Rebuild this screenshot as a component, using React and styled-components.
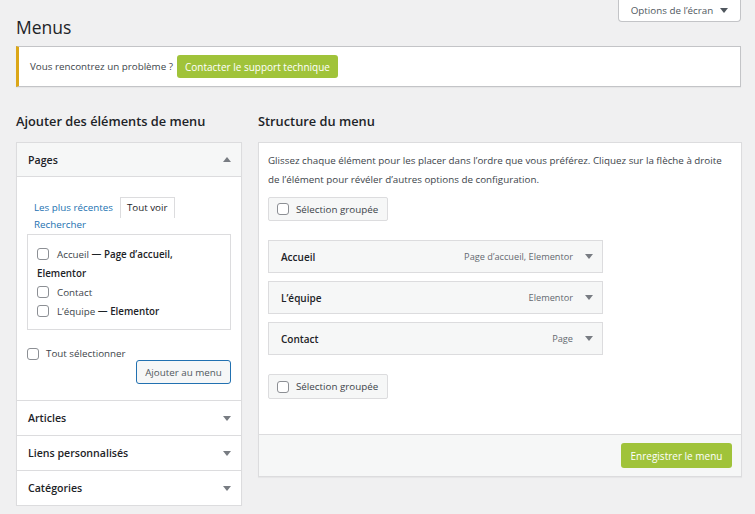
import React from "react";
import styled, { createGlobalStyle } from "styled-components";

const GlobalStyle = createGlobalStyle`
  html, body {
    margin: 0;
    background: #f0f0f1;
  }
  body {
    font-family: "Open Sans", "Noto Sans", sans-serif;
    font-size: 9.8px;
    color: #3c434a;
  }
  * { box-sizing: border-box; }
`;

const Page = styled.div`
  width: 755px;
  padding: 0 14px 0 16px;
`;

const Header = styled.div`
  display: flex;
  justify-content: space-between;
  align-items: flex-start;
  height: 46px;
`;

const Title = styled.h1`
  margin: 0;
  padding-top: 15px;
  font-size: 17.5px;
  font-weight: 400;
  line-height: 24px;
  color: #1d2327;
`;

const ScreenOptions = styled.button`
  display: flex;
  align-items: center;
  justify-content: center;
  gap: 7px;
  width: 123px;
  height: 22px;
  padding: 0;
  background: #fff;
  border: 1px solid #c3c4c7;
  border-top: none;
  border-radius: 0 0 4px 4px;
  font: inherit;
  color: #50575e;
`;

const Notice = styled.div`
  display: flex;
  align-items: center;
  gap: 4px;
  height: 41px;
  padding: 0 11px;
  background: #fff;
  border: 1px solid #c3c4c7;
  border-left: 3px solid #dba617;
  box-shadow: 0 1px 1px rgba(0, 0, 0, 0.04);
`;

const GreenButton = styled.button`
  height: ${(p) => p.$h || 23}px;
  min-width: ${(p) => p.$w || 0}px;
  padding: 0 8px;
  border: none;
  border-radius: 3px;
  background: #a0c33a;
  color: #fff;
  font: inherit;
  font-size: 10px;
`;

const Columns = styled.div`
  display: flex;
  gap: 16px;
`;

const Column = styled.div`
  width: ${(p) => p.$w}px;
  flex: none;
`;

const ColumnHeading = styled.h2`
  margin: 0;
  padding: 24px 0 11px;
  line-height: 20px;
  font-size: 12.8px;
  font-weight: 600;
  color: #1d2327;
`;

const Accordion = styled.div`
  background: #fff;
  border: 1px solid #dcdcde;
  box-shadow: 0 1px 1px rgba(0, 0, 0, 0.04);
`;

const Section = styled.div`
  & + & {
    border-top: 1px solid #dcdcde;
  }
`;

const SectionHeader = styled.div`
  display: flex;
  align-items: center;
  justify-content: space-between;
  height: 34px;
  padding: 0 10px 0 11px;
  background: ${(p) => (p.$open ? "#f6f7f7" : "#fff")};
  border-bottom: ${(p) => (p.$open ? "1px solid #dcdcde" : "none")};
  font-size: 10.6px;
  font-weight: 600;
  color: #1d2327;
`;

const SectionBody = styled.div`
  display: flex;
  flex-direction: column;
  padding: 20px 10px 16px;
`;

const Tabs = styled.div`
  display: flex;
  flex-wrap: wrap;
  align-items: center;
`;

const Tab = styled.span`
  line-height: 14px;
  padding: ${(p) => (p.$active ? "3px 6px" : "0 7px")};
  color: ${(p) => (p.$active ? "#1d2327" : "#2271b1")};
  background: ${(p) => (p.$active ? "#fff" : "transparent")};
  border: ${(p) => (p.$active ? "1px solid #dcdcde" : "none")};
  border-bottom: none;
`;

const ListBox = styled.div`
  margin-top: 2px;
  padding: 10px 9px 8px;
  border: 1px solid #dcdcde;
`;

const ListItem = styled.label`
  display: block;
  line-height: 19px;
`;

const Strong = styled.span`
  font-weight: 600;
  color: #1d2327;
`;

const Check = styled.input.attrs({ type: "checkbox" })`
  appearance: none;
  width: 12px;
  height: 12px;
  margin: 0 ${(p) => p.$gap || 8}px 0 0;
  vertical-align: -2px;
  border: 1px solid #8c8f94;
  border-radius: 3px;
  background: #fff;
`;

const SelectAll = styled.label`
  display: flex;
  align-items: center;
  margin-top: 15px;
  line-height: 18px;
  color: #3c434a;
`;

const SecondaryButton = styled.button`
  align-self: flex-end;
  margin-top: -3px;
  width: 95px;
  height: 24px;
  padding: 0;
  background: #f6f7f7;
  border: 1px solid #2271b1;
  border-radius: 3px;
  font: inherit;
  color: #50575e;
`;

const Panel = styled.div`
  background: #fff;
  border: 1px solid #dcdcde;
  box-shadow: 0 1px 1px rgba(0, 0, 0, 0.04);
`;

const PanelBody = styled.div`
  display: flex;
  flex-direction: column;
  align-items: flex-start;
  padding: 8px 9px 35px;
`;

const Description = styled.p`
  margin: 0;
  line-height: 19px;
`;

const BulkSelect = styled.label`
  display: flex;
  align-items: center;
  width: 120px;
  height: ${(p) => p.$h || 24}px;
  margin-top: ${(p) => p.$mt}px;
  padding-left: 8px;
  background: #f6f7f7;
  border: 1px solid #dcdcde;
  border-radius: 2px;
`;

const MenuItems = styled.div`
  display: flex;
  flex-direction: column;
  gap: 8px;
  margin-top: 19px;
`;

const MenuItem = styled.div`
  display: flex;
  align-items: center;
  width: 335px;
  height: 33px;
  padding: 0 9px 0 12px;
  background: #f6f7f7;
  border: 1px solid #dcdcde;
`;

const ItemTitle = styled.span`
  flex: 1;
  font-size: 10px;
  font-weight: 600;
  color: #1d2327;
`;

const ItemMeta = styled.span`
  margin-right: 12px;
  font-size: 9.2px;
  color: #646970;
`;

const PanelFooter = styled.div`
  display: flex;
  justify-content: flex-end;
  padding: 8px 9px;
  background: #f6f7f7;
  border-top: 1px solid #dcdcde;
`;

const Arrow = ({ up, color = "#787c82" }) => (
  <svg width="8" height="5" viewBox="0 0 8 5" aria-hidden="true">
    <path d={up ? "M0 5 L4 0 L8 5 Z" : "M0 0 L8 0 L4 5 Z"} fill={color} />
  </svg>
);

const pages = [
  { name: "Accueil", extra: ["— Page d’accueil,", "Elementor"] },
  { name: "Contact", extra: [] },
  { name: "L’équipe", extra: ["— Elementor"] },
];

const menuItems = [
  { title: "Accueil", meta: "Page d’accueil, Elementor" },
  { title: "L’équipe", meta: "Elementor" },
  { title: "Contact", meta: "Page" },
];

export default function App() {
  return (
    <>
      <GlobalStyle />
      <Page>
        <Header>
          <Title>Menus</Title>
          <ScreenOptions>
            Options de l’écran <Arrow color="#50575e" />
          </ScreenOptions>
        </Header>

        <Notice>
          <span>Vous rencontrez un problème ?</span>
          <GreenButton>Contacter le support technique</GreenButton>
        </Notice>

        <Columns>
          <Column $w={226}>
            <ColumnHeading>Ajouter des éléments de menu</ColumnHeading>
            <Accordion>
              <Section>
                <SectionHeader $open>
                  Pages <Arrow up />
                </SectionHeader>
                <SectionBody>
                  <Tabs>
                    <Tab>Les plus récentes</Tab>
                    <Tab $active>Tout voir</Tab>
                    <Tab>Rechercher</Tab>
                  </Tabs>
                  <ListBox>
                    {pages.map((p) => (
                      <ListItem key={p.name}>
                        <Check />
                        {p.name}
                        {p.extra.map((chunk) => (
                          <React.Fragment key={chunk}>
                            {" "}
                            <Strong>{chunk}</Strong>
                          </React.Fragment>
                        ))}
                      </ListItem>
                    ))}
                  </ListBox>
                  <SelectAll>
                    <Check $gap={7} />
                    Tout sélectionner
                  </SelectAll>
                  <SecondaryButton>Ajouter au menu</SecondaryButton>
                </SectionBody>
              </Section>
              {["Articles", "Liens personnalisés", "Catégories"].map((t) => (
                <Section key={t}>
                  <SectionHeader>
                    {t} <Arrow />
                  </SectionHeader>
                </Section>
              ))}
            </Accordion>
          </Column>

          <Column $w={484}>
            <ColumnHeading>Structure du menu</ColumnHeading>
            <Panel>
              <PanelBody>
                <Description>
                  Glissez chaque élément pour les placer dans l’ordre que vous préférez. Cliquez sur la flèche à droite
                  de l’élément pour révéler d’autres options de configuration.
                </Description>
                <BulkSelect $mt={8}>
                  <Check $gap={7} />
                  Sélection groupée
                </BulkSelect>
                <MenuItems>
                  {menuItems.map((m) => (
                    <MenuItem key={m.title}>
                      <ItemTitle>{m.title}</ItemTitle>
                      <ItemMeta>{m.meta}</ItemMeta>
                      <Arrow />
                    </MenuItem>
                  ))}
                </MenuItems>
                <BulkSelect $mt={19} $h={25}>
                  <Check $gap={7} />
                  Sélection groupée
                </BulkSelect>
              </PanelBody>
              <PanelFooter>
                <GreenButton $h={25} $w={111}>
                  Enregistrer le menu
                </GreenButton>
              </PanelFooter>
            </Panel>
          </Column>
        </Columns>
      </Page>
    </>
  );
}
